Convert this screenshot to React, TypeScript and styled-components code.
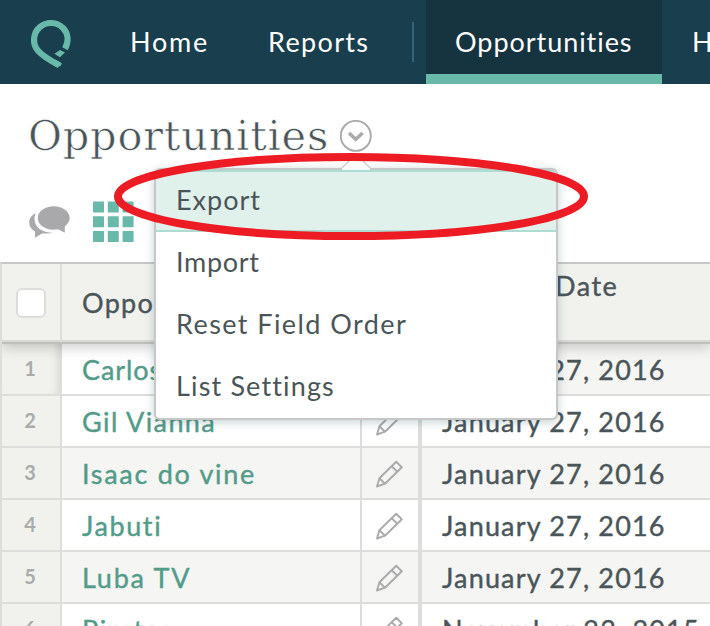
import React from "react";
import styled, { createGlobalStyle } from "styled-components";

const GlobalStyle = createGlobalStyle`
  * { box-sizing: border-box; }
  html, body { margin: 0; padding: 0; overflow: hidden; background: #fff; }
  body { font-family: Lato, "Liberation Sans", sans-serif; color: #4a5559; }
`;

const Page = styled.div`
  width: 710px;
  height: 626px;
  overflow: hidden;
  position: relative;
  white-space: nowrap;
`;

const NavBar = styled.nav`
  display: flex;
  height: 84px;
  background: #193e4d;
  overflow: hidden;
`;

const LogoBox = styled.div`
  width: 103px;
  flex: none;
  padding: 18px 0 0 28px;
`;

const NavItem = styled.a<{ $width: number; $pad: number; $track: number; $active?: boolean }>`
  flex: none;
  width: ${(p) => p.$width}px;
  height: 84px;
  padding-left: ${(p) => p.$pad}px;
  font-size: 27px;
  line-height: 84px;
  letter-spacing: ${(p) => p.$track}px;
  color: #fff;
  background: ${(p) => (p.$active ? "#163340" : "transparent")};
  box-shadow: ${(p) => (p.$active ? "inset 0 -10px #68b9a9" : "none")};
`;

const NavDivider = styled.span`
  flex: none;
  width: 2px;
  height: 40px;
  margin: 22px 12px 0 0;
  background: #33647f;
`;

const TitleBar = styled.header`
  display: flex;
  height: 104px;
  padding: 0 0 0 28px;
`;

const Title = styled.h1`
  flex: none;
  width: 312px;
  margin: 0;
  font-family: "DejaVu Serif", serif;
  font-size: 41.5px;
  font-weight: 400;
  line-height: 104px;
  letter-spacing: 0.75px;
  -webkit-text-stroke: 0.65px #fff;
`;

const MenuAnchor = styled.div`
  position: relative;
  padding-top: 36px;
`;

const Menu = styled.div`
  position: absolute;
  z-index: 2;
  left: -186px;
  top: 84px;
  width: 404px;
  height: 252px;
  border: 2px solid #c6c7c6;
  border-radius: 6px;
  background: #fff;
  box-shadow: 0 2px 10px rgba(25, 62, 77, 0.25);
`;

const MenuArrow = styled.svg`
  position: absolute;
  left: 184px;
  top: -20px;
`;

const MenuItem = styled.div<{ $track: number; $active?: boolean }>`
  height: 62px;
  padding-left: 20px;
  font-size: 27px;
  line-height: ${(p) => (p.$active ? 56 : 60)}px;
  letter-spacing: ${(p) => p.$track}px;
  background: ${(p) => (p.$active ? "#e0f0ea" : "transparent")};
  border: solid #aedcd2;
  border-width: ${(p) => (p.$active ? "2px 0" : "0")};
  border-radius: ${(p) => (p.$active ? "4px 4px 0 0" : "0")};
`;

const Toolbar = styled.div`
  display: flex;
  gap: 21px;
  height: 74px;
  padding: 13px 0 0 29px;
`;

const Table = styled.div`
  border-top: 2px solid #c6c7c6;
  border-left: 2px solid #dddddb;
`;

const GridRow = styled.div<{ $shade?: boolean }>`
  display: grid;
  grid-template-columns: 60px 300px 60px 1fr;
  grid-template-rows: 100%;
  height: 52px;
  background: ${(p) => (p.$shade ? "#f5f5f3" : "#fff")};
  border-bottom: 2px solid #dddddb;
  font-size: 27px;
  line-height: 52px;
  -webkit-text-stroke: 0.4px;
`;

const HeaderRow = styled(GridRow)`
  position: relative;
  z-index: 1;
  height: 80px;
  background: #f1f2ed;
  border-bottom: 2px solid #bfbfbd;
  box-shadow: inset 0 -2px #d8d8d6, 0 4px 12px rgba(0, 0, 0, 0.18);
  clip-path: inset(0 0 -20px 0);
`;

const CheckCell = styled.div`
  border-right: 2px solid #dddddb;
  padding: 24px 0 0 14px;
`;

const Checkbox = styled.div`
  width: 30px;
  height: 30px;
  border: 2px solid #dddddb;
  border-radius: 6px;
  background: #fff;
`;

const HeadName = styled.div`
  padding-left: 20px;
  line-height: 77px;
  letter-spacing: 1.3px;
`;

const HeadDate = styled.div`
  grid-column: 4;
  padding-left: 133px;
  line-height: 44px;
  letter-spacing: 1.5px;
`;

const NumberCell = styled.div<{ $first?: boolean }>`
  background: #f1f2ed;
  border-right: 2px solid #dddddb;
  padding-right: 2px;
  text-align: center;
  font-size: 20px;
  font-weight: 700;
  line-height: 49px;
  color: #aaacac;
  -webkit-text-stroke: 0;
  box-shadow: ${(p) => (p.$first ? "inset -7px 0 8px -5px rgba(0, 0, 0, 0.12)" : "none")};
`;

const NameCell = styled.div<{ $track: number; $first?: boolean }>`
  padding-left: 20px;
  border-right: 2px solid #dddddb;
  color: #539b89;
  letter-spacing: ${(p) => p.$track}px;
  background: ${(p) => (p.$first ? "#fff" : "transparent")};
`;

const EditCell = styled.div`
  border-right: 4px solid #dddddb;
  padding: 12px 0 0 13px;
  line-height: 0;
`;

const DateCell = styled.div`
  padding-left: 20px;
  letter-spacing: 1.18px;
`;

const Annotation = styled.svg`
  position: absolute;
  z-index: 5;
  left: 110px;
  top: 148px;
  pointer-events: none;
`;

const Logo = () => (
  <svg width="48" height="54" viewBox="28 18 48 54" fill="none">
    <path d="M65 48.8 C68.8 41.5 68.5 33.5 63 28 C56.5 21.5 46.5 21.4 39.8 27.2 C33 33.2 32 43.5 37.8 50.4 C42 55.2 47.5 59 59.3 65.2" stroke="#68b9a9" strokeWidth="6.2" />
    <path d="M54.4 53.8 L60 50 L65 52.6 L59.8 57.2 Z" fill="#68b9a9" />
    <path d="M55 59.5 L62 63.4 L60.5 66 L57 67.2 L53 65Z" fill="#68b9a9" />
  </svg>
);

const Chevron = () => (
  <svg width="32" height="32" viewBox="0 0 32 32" fill="none" display="block">
    <circle cx="15.8" cy="15.9" r="15" stroke="#aaaaaa" strokeWidth="1.9" />
    <path d="M9 13 L15.8 19.3 L22.6 13" stroke="#aaaaaa" strokeWidth="3.6" />
  </svg>
);

const Bubbles = () => (
  <svg width="42" height="38" viewBox="29 201 42 38" fill="#a9a9ac">
    <path d="M35.5 213.5 C31 215.5 29.2 219 29.2 222.8 C29.2 226.3 31.5 229.4 35 231.5 V237.8 L42.5 233.3 C46 233.9 50 233.5 53 232.8 C42 232.8 34.5 227 34.5 219 C34.5 217 34.8 215.2 35.5 213.5Z" />
    <path d="M53.7 206.2 C62.6 206.2 69.7 211.3 69.7 218 C69.7 221.2 67.8 224.2 64.8 226.2 V232.7 L58 229.3 C48 231.2 37.8 226.3 37.8 218 C37.8 211.3 44.8 206.2 53.7 206.2Z" />
  </svg>
);

const Tiles = () => (
  <svg width="42" height="42" viewBox="0 0 42 42" fill="#68b9a9">
    {[0, 1, 2].map((r) =>
      [0, 1, 2].map((c) => <rect key={`${r}${c}`} x={1 + c * 14.8} y={0.4 + r * 14.8} width="11" height="11" rx=".5" />)
    )}
  </svg>
);

const Pencil = () => (
  <svg width="28" height="28" viewBox="0 0 28 28" fill="none" stroke="#a9abab" strokeWidth="1.9" strokeLinejoin="round">
    <path d="M2 26.5 L4.4 18.3 L21.2 1.8 L26.8 7.2 L10 23.7 Z" />
    <path d="M4.4 18.3 L10 23.7 M16.7 6.3 L22.3 11.7" />
  </svg>
);

const rows = [
  { name: "Carlos", track: 0.9, date: "January 27, 2016" },
  { name: "Gil Vianna", track: 1.4, date: "January 27, 2016" },
  { name: "Isaac do vine", track: 1.7, date: "January 27, 2016" },
  { name: "Jabuti", track: 1.6, date: "January 27, 2016" },
  { name: "Luba TV", track: 1.75, date: "January 27, 2016" },
  { name: "Pirates", track: 1.5, date: "November 23, 2015" },
];

export default function App() {
  return (
    <Page>
      <GlobalStyle />
      <NavBar>
        <LogoBox><Logo /></LogoBox>
        <NavItem $width={137} $pad={27} $track={1.8}>Home</NavItem>
        <NavItem $width={172} $pad={28} $track={1.35}>Reports</NavItem>
        <NavDivider />
        <NavItem $width={236} $pad={29} $track={0.95} $active>Opportunities</NavItem>
        <NavItem $width={120} $pad={30} $track={0.9}>H</NavItem>
      </NavBar>
      <TitleBar>
        <Title>Opportunities</Title>
        <MenuAnchor>
          <Chevron />
          <Menu>
            <MenuItem $active $track={1}>Export</MenuItem>
            <MenuItem $track={0.7}>Import</MenuItem>
            <MenuItem $track={1.43}>Reset Field Order</MenuItem>
            <MenuItem $track={1.15}>List Settings</MenuItem>
            <MenuArrow width="32" height="20" viewBox="0 0 32 20">
              <path d="M2 18 L16 4 L30 18 V20 H2Z" fill="#fff" />
              <path d="M1.5 18.5 L16 4 L30.5 18.5" fill="none" stroke="#d2d2d2" strokeWidth="1.6" />
            </MenuArrow>
          </Menu>
        </MenuAnchor>
      </TitleBar>
      <Toolbar>
        <Bubbles />
        <Tiles />
      </Toolbar>
      <Table>
        <HeaderRow>
          <CheckCell><Checkbox /></CheckCell>
          <HeadName>Oppo</HeadName>
          <HeadDate>Date</HeadDate>
        </HeaderRow>
        {rows.map((r, i) => (
          <GridRow key={r.name} $shade={i % 2 === 0}>
            <NumberCell $first={i === 0}>{i + 1}</NumberCell>
            <NameCell $track={r.track} $first={i === 0}>{r.name}</NameCell>
            <EditCell><Pencil /></EditCell>
            <DateCell>{r.date}</DateCell>
          </GridRow>
        ))}
      </Table>
      <Annotation width="482" height="98" viewBox="110 148 482 98" fill="none">
        <ellipse cx="351" cy="196.5" rx="233" ry="39.6" stroke="#ed1c24" strokeWidth="8" />
      </Annotation>
    </Page>
  );
}
